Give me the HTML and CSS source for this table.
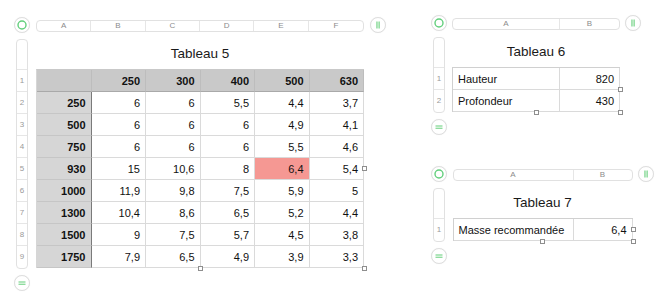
FILE: index.html
```html
<!DOCTYPE html>
<html lang="fr">
<head>
<meta charset="utf-8">
<title>Tableaux</title>
<link rel="stylesheet" href="styles.css">
</head>
<body>

<div class="sheet t5">
  <span class="btn b-sel"><svg viewBox="0 0 16 16" width="16" height="16"><circle cx="8" cy="8" r="4" fill="none" stroke="#62cf7c" stroke-width="1.4"/></svg></span>
  <div class="colbar"><span>A</span><span>B</span><span>C</span><span>D</span><span>E</span><span>F</span></div>
  <span class="btn b-cols"><svg viewBox="0 0 16 16" width="16" height="16"><rect x="6.2" y="4.5" width="1.5" height="7" fill="#8fdc9e"/><rect x="8.4" y="4.5" width="1.5" height="7" fill="#8fdc9e"/></svg></span>

  <div class="rowbar"><span class="rb-top"></span><span>1</span><span>2</span><span>3</span><span>4</span><span>5</span><span>6</span><span>7</span><span>8</span><span>9</span></div>
  <div class="content">
    <div class="title">Tableau 5</div>
    <div class="table">
      <div class="c h"></div><div class="c h">250</div><div class="c h">300</div><div class="c h">400</div><div class="c h">500</div><div class="c h">630</div>
      <div class="c k">250</div><div class="c">6</div><div class="c">6</div><div class="c">5,5</div><div class="c">4,4</div><div class="c">3,7</div>
      <div class="c k">500</div><div class="c">6</div><div class="c">6</div><div class="c">6</div><div class="c">4,9</div><div class="c">4,1</div>
      <div class="c k">750</div><div class="c">6</div><div class="c">6</div><div class="c">6</div><div class="c">5,5</div><div class="c">4,6</div>
      <div class="c k">930</div><div class="c">15</div><div class="c">10,6</div><div class="c">8</div><div class="c hl">6,4</div><div class="c">5,4</div>
      <div class="c k">1000</div><div class="c">11,9</div><div class="c">9,8</div><div class="c">7,5</div><div class="c">5,9</div><div class="c">5</div>
      <div class="c k">1300</div><div class="c">10,4</div><div class="c">8,6</div><div class="c">6,5</div><div class="c">5,2</div><div class="c">4,4</div>
      <div class="c k">1500</div><div class="c">9</div><div class="c">7,5</div><div class="c">5,7</div><div class="c">4,5</div><div class="c">3,8</div>
      <div class="c k">1750</div><div class="c">7,9</div><div class="c">6,5</div><div class="c">4,9</div><div class="c">3,9</div><div class="c">3,3</div>
      <span class="handle hr"></span><span class="handle hb"></span><span class="handle hc"></span>
    </div>
  </div>

  <span class="btn b-rows"><svg viewBox="0 0 16 16" width="16" height="16"><rect x="4.5" y="6.3" width="7" height="1.4" fill="#8fdc9e"/><rect x="4.5" y="8.6" width="7" height="1.4" fill="#8fdc9e"/></svg></span>
</div>

<div class="sheet t6">
  <span class="btn b-sel"><svg viewBox="0 0 16 16" width="16" height="16"><circle cx="8" cy="8" r="4" fill="none" stroke="#62cf7c" stroke-width="1.4"/></svg></span>
  <div class="colbar"><span>A</span><span>B</span></div>
  <span class="btn b-cols"><svg viewBox="0 0 16 16" width="16" height="16"><rect x="6.2" y="4.5" width="1.5" height="7" fill="#8fdc9e"/><rect x="8.4" y="4.5" width="1.5" height="7" fill="#8fdc9e"/></svg></span>

  <div class="rowbar"><span class="rb-top"></span><span>1</span><span>2</span></div>
  <div class="content">
    <div class="title">Tableau 6</div>
    <div class="table">
      <div class="c l">Hauteur</div><div class="c">820</div>
      <div class="c l">Profondeur</div><div class="c">430</div>
      <span class="handle hr"></span><span class="handle hb"></span><span class="handle hc"></span>
    </div>
  </div>

  <span class="btn b-rows"><svg viewBox="0 0 16 16" width="16" height="16"><rect x="4.5" y="6.3" width="7" height="1.4" fill="#8fdc9e"/><rect x="4.5" y="8.6" width="7" height="1.4" fill="#8fdc9e"/></svg></span>
</div>

<div class="sheet t7">
  <span class="btn b-sel"><svg viewBox="0 0 16 16" width="16" height="16"><circle cx="8" cy="8" r="4" fill="none" stroke="#62cf7c" stroke-width="1.4"/></svg></span>
  <div class="colbar"><span>A</span><span>B</span></div>
  <span class="btn b-cols"><svg viewBox="0 0 16 16" width="16" height="16"><rect x="6.2" y="4.5" width="1.5" height="7" fill="#8fdc9e"/><rect x="8.4" y="4.5" width="1.5" height="7" fill="#8fdc9e"/></svg></span>

  <div class="rowbar"><span class="rb-top"></span><span>1</span></div>
  <div class="content">
    <div class="title">Tableau 7</div>
    <div class="table">
      <div class="c l">Masse recommandée</div><div class="c">6,4</div>
      <span class="handle hr"></span><span class="handle hb"></span><span class="handle hc"></span>
    </div>
  </div>

  <span class="btn b-rows"><svg viewBox="0 0 16 16" width="16" height="16"><rect x="4.5" y="6.3" width="7" height="1.4" fill="#8fdc9e"/><rect x="4.5" y="8.6" width="7" height="1.4" fill="#8fdc9e"/></svg></span>
</div>

</body>
</html>
```

FILE: styles.css
```css
* { box-sizing: border-box; }

html, body {
  margin: 0;
  padding: 0;
  background: #ffffff;
}

body {
  position: relative;
  width: 670px;
  height: 300px;
  overflow: hidden;
  font-family: "Liberation Sans", Arial, sans-serif;
  color: #111;
}

/* a table object placed on the free canvas */
.sheet {
  position: absolute;
  display: grid;
  grid-template-columns: 16px var(--w) 16px;
  grid-template-rows: 16px auto 16px;
  column-gap: var(--g);
  row-gap: 6px;
}

.t5 { left: 14px; top: 17px; --w: 328px; --g: 6px; --cols: repeat(6, 1fr); }
.t6 { left: 431px; top: 15px; --w: 168px; --g: 5px; --cols: 107px 1fr; }
.t7 { left: 431px; top: 166px; --w: 180px; --g: 5.5px; --cols: 120px 1fr; }

.btn {
  width: 16px;
  height: 16px;
  border-radius: 50%;
  border: 1px solid #dedede;
  background: #fff;
  box-shadow: 0 0 1px rgba(0, 0, 0, 0.08);
  display: flex;
  align-items: center;
  justify-content: center;
}
.btn svg { display: block; flex: none; margin: -1px; }

.b-sel { grid-column: 1; grid-row: 1; }
.b-cols { grid-column: 3; grid-row: 1; }
.b-rows { grid-column: 1; grid-row: 3; }

.colbar {
  grid-column: 2;
  grid-row: 1;
  align-self: center;
  margin-top: 2px;
  height: 12px;
  display: grid;
  grid-template-columns: var(--cols);
  border: 1px solid #e1e1e1;
  border-radius: 4px;
  background: #fff;
  overflow: hidden;
}
.colbar span {
  font-size: 8px;
  line-height: 10px;
  color: #8c8c8c;
  text-align: center;
  border-right: 1px solid #e6e6e6;
}
.colbar span:last-child { border-right: none; }

.rowbar {
  grid-column: 1;
  grid-row: 2;
  justify-self: center;
  width: 12px;
  display: grid;
  grid-template-rows: 30px;
  grid-auto-rows: 22px;
  border: 1px solid #e1e1e1;
  border-radius: 4px;
  background: #fff;
  overflow: hidden;
}
.rowbar span {
  font-size: 8px;
  line-height: 21px;
  color: #9a9a9a;
  text-align: center;
  border-bottom: 1px solid #e6e6e6;
}
.rowbar span:last-child { border-bottom: none; }

.content {
  grid-column: 2;
  grid-row: 2;
  display: flex;
  flex-direction: column;
}

.title {
  height: 30px;
  line-height: 30px;
  text-align: center;
  font-size: 13.5px;
  color: #1a1a1a;
}

.table {
  position: relative;
  display: grid;
  grid-template-columns: var(--cols);
  grid-auto-rows: 22px;
  border-top: 1px solid #d0d0d0;
  border-left: 1px solid #d0d0d0;
}

.c {
  font-size: 11px;
  line-height: 17px;
  padding: 3px 5px 0;
  text-align: right;
  white-space: nowrap;
  border-right: 1px solid #dadada;
  border-bottom: 1px solid #dadada;
  color: #111;
}
.c.l { text-align: left; }

.c.h {
  background: #c9c9c9;
  font-weight: bold;
  border-right-color: #bdbdbd;
  border-bottom-color: #a9a9a9;
}
.c.k {
  background: #d6d6d6;
  font-weight: bold;
  border-right-color: #7a7a7a;
  border-bottom-color: #c6c6c6;
}
.c.hl { background: #f59893; }

.t5 .table { border-top-color: #c9c9c9; border-left-color: #d6d6d6; }

.handle {
  position: absolute;
  width: 5px;
  height: 5px;
  background: #fff;
  border: 1px solid #8e8e8e;
}
.hr { right: -3px; top: calc(50% - 3px); }
.hb { left: calc(50% - 3px); bottom: -3px; }
.hc { right: -3px; bottom: -3px; }
```
